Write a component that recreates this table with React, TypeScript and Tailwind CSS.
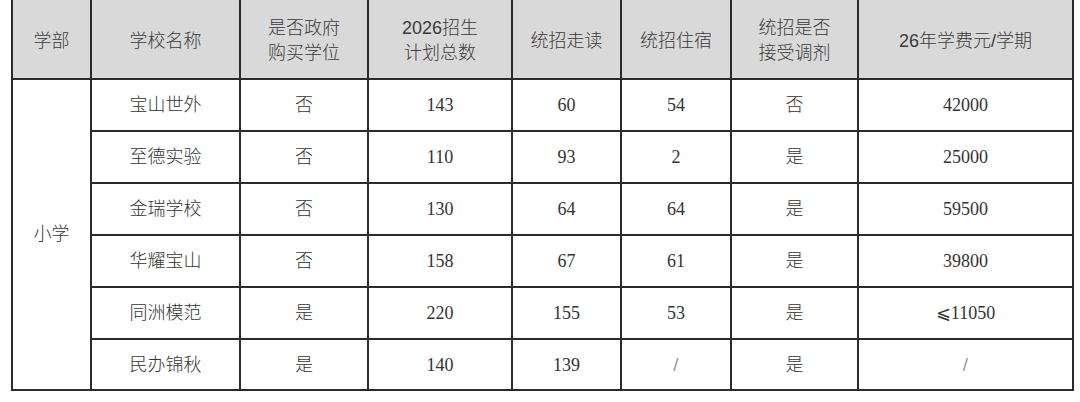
import React from "react";

const headers: string[][] = [
  ["学部"],
  ["学校名称"],
  ["是否政府", "购买学位"],
  ["2026招生", "计划总数"],
  ["统招走读"],
  ["统招住宿"],
  ["统招是否", "接受调剂"],
  ["26年学费元/学期"],
];

const rows: string[][] = [
  ["宝山世外", "否", "143", "60", "54", "否", "42000"],
  ["至德实验", "否", "110", "93", "2", "是", "25000"],
  ["金瑞学校", "否", "130", "64", "64", "是", "59500"],
  ["华耀宝山", "否", "158", "67", "61", "是", "39800"],
  ["同洲模范", "是", "220", "155", "53", "是", "⩽11050"],
  ["民办锦秋", "是", "140", "139", "/", "是", "/"],
];

const widths = [79, 149, 128, 144, 109, 110, 127, 215];

export default function App() {
  return (
    <div className="w-[1080px] h-[402px] bg-white overflow-hidden">
      <table className="ml-[11px] table-fixed border-collapse w-[1061px]">
        <colgroup>
          {widths.map((w, i) => (
            <col key={i} style={{ width: w }} />
          ))}
        </colgroup>
        <thead>
          <tr className="h-[79px]">
            {headers.map((h, i) => (
              <th
                key={i}
                className="border-2 border-t-0 border-[#2b2b2b] bg-[#d9d9d9] p-0 pt-[4px] font-light text-[18px] leading-[25px] text-[#3a3a3a] text-center align-middle [font-family:'Liberation_Sans','Noto_Sans_CJK_SC',sans-serif]"
              >
                {h.map((line, j) => (
                  <div key={j}>{line}</div>
                ))}
              </th>
            ))}
          </tr>
        </thead>
        <tbody>
          {rows.map((r, ri) => (
            <tr key={ri} className={ri === 5 ? "h-[51px]" : "h-[52px]"}>
              {ri === 0 && (
                <td
                  rowSpan={6}
                  className="border-2 border-[#2b2b2b] p-0 text-center align-middle text-[18px] text-[#333] [font-family:'Liberation_Serif','Noto_Sans_CJK_SC',serif] font-light"
                >
                  小学
                </td>
              )}
              {r.map((c, ci) => (
                <td
                  key={ci}
                  className="border-2 border-[#2b2b2b] p-0 pt-[1px] text-center align-middle text-[18px] text-[#333] [font-family:'Liberation_Serif','Noto_Sans_CJK_SC','DejaVu_Serif',serif] font-light"
                >
                  {c === "/" ? (
                    <span className="text-[#999] text-[19px] [font-family:'Liberation_Sans',sans-serif]">/</span>
                  ) : (
                    c
                  )}
                </td>
              ))}
            </tr>
          ))}
        </tbody>
      </table>
    </div>
  );
}
